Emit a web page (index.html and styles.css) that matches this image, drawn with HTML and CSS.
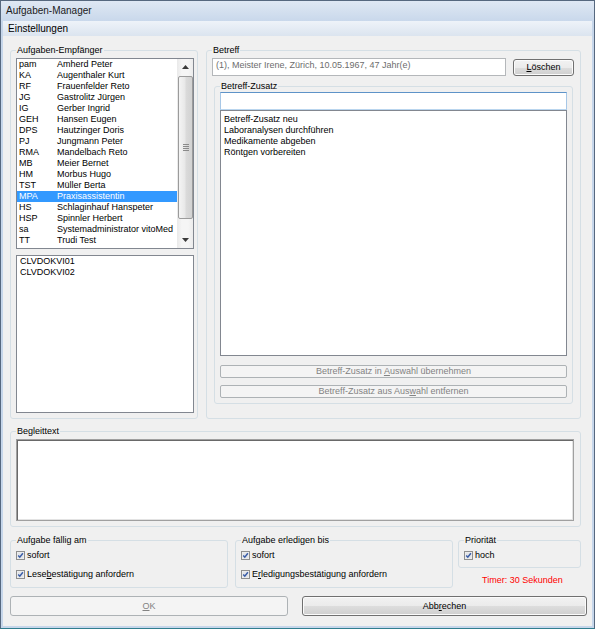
FILE: index.html
```html
<!DOCTYPE html>
<html lang="de">
<head>
<meta charset="utf-8">
<title>Aufgaben-Manager</title>
<link rel="stylesheet" href="styles.css">
</head>
<body>
<div class="window">
  <div class="titlebar">Aufgaben-Manager</div>
  <div class="frame-body">
    <div class="menubar"><span class="menu-item">Einstellungen</span></div>
    <div class="client">
      <div class="top-row">
        <fieldset class="group group-recipients">
          <legend>Aufgaben-Empfänger</legend>
          <div class="listbox listbox-users">
            <div class="list-rows">
              <div class="row"><span class="code">pam</span><span class="name">Amherd Peter</span></div>
              <div class="row"><span class="code">KA</span><span class="name">Augenthaler Kurt</span></div>
              <div class="row"><span class="code">RF</span><span class="name">Frauenfelder Reto</span></div>
              <div class="row"><span class="code">JG</span><span class="name">Gastrolitz Jürgen</span></div>
              <div class="row"><span class="code">IG</span><span class="name">Gerber Ingrid</span></div>
              <div class="row"><span class="code">GEH</span><span class="name">Hansen Eugen</span></div>
              <div class="row"><span class="code">DPS</span><span class="name">Hautzinger Doris</span></div>
              <div class="row"><span class="code">PJ</span><span class="name">Jungmann Peter</span></div>
              <div class="row"><span class="code">RMA</span><span class="name">Mandelbach Reto</span></div>
              <div class="row"><span class="code">MB</span><span class="name">Meier Bernet</span></div>
              <div class="row"><span class="code">HM</span><span class="name">Morbus Hugo</span></div>
              <div class="row"><span class="code">TST</span><span class="name">Müller Berta</span></div>
              <div class="row row-selected"><span class="code">MPA</span><span class="name">Praxisassistentin</span></div>
              <div class="row"><span class="code">HS</span><span class="name">Schlaginhauf Hanspeter</span></div>
              <div class="row"><span class="code">HSP</span><span class="name">Spinnler Herbert</span></div>
              <div class="row"><span class="code">sa</span><span class="name">Systemadministrator vitoMed</span></div>
              <div class="row"><span class="code">TT</span><span class="name">Trudi Test</span></div>
            </div>
            <div class="scrollbar">
              <div class="sb-btn">
                <svg width="7" height="4" viewBox="0 0 7 4"><path d="M0 4 L3.5 0 L7 4 Z" fill="#3a3a3a"/></svg>
              </div>
              <div class="sb-track">
                <div class="sb-thumb">
                  <svg width="6" height="7" viewBox="0 0 6 7">
                    <path d="M0 0.5 H6 M0 2.5 H6 M0 4.5 H6 M0 6.5 H6" stroke="#8a8a8a" stroke-width="1"/>
                  </svg>
                </div>
              </div>
              <div class="sb-btn">
                <svg width="7" height="4" viewBox="0 0 7 4"><path d="M0 0 L3.5 4 L7 0 Z" fill="#3a3a3a"/></svg>
              </div>
            </div>
          </div>
          <div class="listbox listbox-computers">
            <div class="list-rows">
              <div class="row row-plain">CLVDOKVI01</div>
              <div class="row row-plain">CLVDOKVI02</div>
            </div>
          </div>
        </fieldset>

        <fieldset class="group group-subject">
          <legend>Betreff</legend>
          <div class="subject-row">
            <div class="textbox textbox-disabled">(1), Meister Irene, Zürich, 10.05.1967, 47 Jahr(e)</div>
            <button class="btn btn-delete" type="button"><u>L</u>öschen</button>
          </div>
          <fieldset class="group group-addon">
            <legend>Betreff-Zusatz</legend>
            <div class="textbox textbox-focus"></div>
            <div class="listbox listbox-addons">
              <div class="list-rows list-rows-addons">
                <div class="row row-plain">Betreff-Zusatz neu</div>
                <div class="row row-plain">Laboranalysen durchführen</div>
                <div class="row row-plain">Medikamente abgeben</div>
                <div class="row row-plain">Röntgen vorbereiten</div>
              </div>
            </div>
            <button class="btn btn-disabled btn-wide btn-first" type="button">Betreff-Zusatz in <u>A</u>uswahl übernehmen</button>
            <button class="btn btn-disabled btn-wide btn-second" type="button">Betreff-Zusatz aus Aus<u>w</u>ahl entfernen</button>
          </fieldset>
        </fieldset>
      </div>

      <fieldset class="group group-text">
        <legend>Begleittext</legend>
        <div class="memo"></div>
      </fieldset>

      <div class="bottom-row">
        <fieldset class="group group-due">
          <legend>Aufgabe fällig am</legend>
          <div class="check-row">
            <svg class="checkbox" width="9" height="9" viewBox="0 0 9 9"><rect x="0.5" y="0.5" width="8" height="8" fill="#f3f3f3" stroke="#8e8f8f"/><rect x="1.5" y="1.5" width="6" height="6" fill="#e3e5e8"/><path d="M2.2 4.4 L3.8 6.2 L6.9 2.2" fill="none" stroke="#3b5ea8" stroke-width="1.5"/></svg>
            <span>sofort</span>
          </div>
          <div class="check-row">
            <svg class="checkbox" width="9" height="9" viewBox="0 0 9 9"><rect x="0.5" y="0.5" width="8" height="8" fill="#f3f3f3" stroke="#8e8f8f"/><rect x="1.5" y="1.5" width="6" height="6" fill="#e3e5e8"/><path d="M2.2 4.4 L3.8 6.2 L6.9 2.2" fill="none" stroke="#3b5ea8" stroke-width="1.5"/></svg>
            <span>Lese<u>b</u>estätigung anfordern</span>
          </div>
        </fieldset>
        <fieldset class="group group-done">
          <legend>Aufgabe erledigen bis</legend>
          <div class="check-row">
            <svg class="checkbox" width="9" height="9" viewBox="0 0 9 9"><rect x="0.5" y="0.5" width="8" height="8" fill="#f3f3f3" stroke="#8e8f8f"/><rect x="1.5" y="1.5" width="6" height="6" fill="#e3e5e8"/><path d="M2.2 4.4 L3.8 6.2 L6.9 2.2" fill="none" stroke="#3b5ea8" stroke-width="1.5"/></svg>
            <span>sofort</span>
          </div>
          <div class="check-row">
            <svg class="checkbox" width="9" height="9" viewBox="0 0 9 9"><rect x="0.5" y="0.5" width="8" height="8" fill="#f3f3f3" stroke="#8e8f8f"/><rect x="1.5" y="1.5" width="6" height="6" fill="#e3e5e8"/><path d="M2.2 4.4 L3.8 6.2 L6.9 2.2" fill="none" stroke="#3b5ea8" stroke-width="1.5"/></svg>
            <span>E<u>r</u>ledigungsbestätigung anfordern</span>
          </div>
        </fieldset>
        <div class="priority-col">
          <fieldset class="group group-priority">
            <legend>Priorität</legend>
            <div class="check-row">
              <svg class="checkbox" width="9" height="9" viewBox="0 0 9 9"><rect x="0.5" y="0.5" width="8" height="8" fill="#f3f3f3" stroke="#8e8f8f"/><rect x="1.5" y="1.5" width="6" height="6" fill="#e3e5e8"/><path d="M2.2 4.4 L3.8 6.2 L6.9 2.2" fill="none" stroke="#3b5ea8" stroke-width="1.5"/></svg>
              <span>hoch</span>
            </div>
          </fieldset>
          <div class="timer">Timer: 30 Sekunden</div>
        </div>
      </div>

      <div class="button-row">
        <button class="btn btn-disabled btn-ok" type="button"><u>O</u>K</button>
        <button class="btn btn-cancel" type="button">Abb<u>r</u>echen</button>
      </div>
    </div>
  </div>
</div>
</body>
</html>
```

FILE: styles.css
```css
html, body {
  margin: 0;
  padding: 0;
  background: #ffffff;
}

body {
  font-family: "Liberation Sans", Arial, sans-serif;
  font-size: 9px;
  line-height: 11px;
  color: #000000;
}

.window {
  width: 595px;
  height: 629px;
  box-sizing: border-box;
  border: 1px solid #56687f;
  border-bottom-color: #2f7d8e;
  background: #c4d4e8;
  display: flex;
  flex-direction: column;
}

.titlebar {
  height: 20px;
  flex: none;
  padding-left: 5px;
  font-size: 10px;
  line-height: 20px;
  color: #1a1a1a;
  background: linear-gradient(#dfe8f4, #c9d8eb);
}

.frame-body {
  flex: 1;
  display: flex;
  flex-direction: column;
  padding: 0 2px 2px 2px;
  background: #c6d6ea;
}

.menubar {
  height: 15px;
  flex: none;
  padding-left: 5px;
  font-size: 10px;
  line-height: 15px;
  background: linear-gradient(#eef3f9, #dbe4ef);
}

.client {
  flex: 1;
  background: #f0f0f0;
  padding: 9px 5px 0 7px;
  display: flex;
  flex-direction: column;
}

/* group boxes */
.group {
  margin: 0;
  min-width: 0;
  border: 1px solid #d5dfe5;
  border-radius: 3px;
  box-sizing: border-box;
}

.group > legend {
  padding: 0 1px;
  margin: 0;
  height: 11px;
  line-height: 11px;
  font-size: 9px;
}

.top-row {
  width: 571px;
  display: grid;
  grid-template-columns: 188px 375px;
  column-gap: 8px;
}

.group-recipients {
  padding: 2px 3px 5px 5px;
}

.group-subject {
  padding: 2px 6px 14px 5px;
}

/* list boxes */
.listbox {
  border: 1px solid #828790;
  background: #ffffff;
  box-sizing: border-box;
  display: flex;
}

.listbox-users {
  height: 191px;
}

.listbox-computers {
  height: 158px;
  margin-top: 6px;
}

.list-rows {
  flex: 1;
  min-width: 0;
}

.row {
  height: 11px;
  line-height: 11px;
  display: flex;
  white-space: nowrap;
  padding-left: 2px;
}

.row-plain {
  padding-left: 3px;
}

.code {
  width: 38px;
  flex: none;
}

.row-selected {
  background: #3399ff;
  color: #ffffff;
}

.list-rows-addons {
  padding-top: 3px;
}

/* scrollbar */
.scrollbar {
  width: 16px;
  flex: none;
  display: flex;
  flex-direction: column;
  background: linear-gradient(90deg, #e9e9e9, #f5f5f5 30%, #f5f5f5 70%, #ececec);
}

.sb-btn {
  height: 16px;
  flex: none;
  display: flex;
  align-items: center;
  justify-content: center;
}

.sb-track {
  flex: 1;
  display: flex;
  flex-direction: column;
}

.sb-thumb {
  margin: 1px 0 0 1px;
  height: 143px;
  box-sizing: border-box;
  border: 1px solid #9b9b9b;
  border-radius: 2px;
  background: linear-gradient(90deg, #f4f4f4, #e8e8e8 45%, #dadada 55%, #d2d2d2);
  display: flex;
  align-items: center;
  justify-content: center;
}

/* subject */
.subject-row {
  display: flex;
  gap: 7px;
  height: 18px;
}

.textbox {
  box-sizing: border-box;
  background: #ffffff;
  white-space: nowrap;
  overflow: hidden;
}

.textbox-disabled {
  flex: 1;
  height: 18px;
  border: 1px solid #b4b7ba;
  color: #6d6d6d;
  padding: 1px 0 0 3px;
}

.group-addon {
  margin: 5px 1px 0 2px;
  padding: 0 5px 5px 5px;
}

.textbox-focus {
  height: 18px;
  border: 1px solid;
  border-color: #5e93c8 #a7c7e6 #b9d5ee #a7c7e6;
}

.listbox-addons {
  height: 246px;
}

/* buttons */
.btn {
  font-family: inherit;
  font-size: 9px;
  line-height: 11px;
  margin: 0;
  padding: 0;
  box-sizing: border-box;
  border-radius: 3px;
  text-align: center;
  color: #000000;
  border: 1px solid #707070;
  background: linear-gradient(#f2f2f2 0%, #ebebeb 50%, #dddddd 51%, #cfcfcf 100%);
  box-shadow: inset 0 0 0 1px #fbfbfb;
}

.btn u {
  text-decoration: underline;
  text-underline-offset: 1px;
}

.btn-delete {
  width: 61px;
  height: 17px;
  flex: none;
  margin-top: 1px;
}

.btn-disabled {
  border-color: #adb2b5;
  background: #f4f4f4;
  box-shadow: none;
  color: #838383;
}

.btn-wide {
  display: block;
  width: 100%;
  height: 13px;
  border-radius: 2px;
}

.btn-first {
  margin-top: 9px;
}

.btn-second {
  margin-top: 7px;
}

/* memo */
.group-text {
  width: 571px;
  margin-top: 7px;
  padding: 2px 6px 5px 5px;
}

.memo {
  height: 82px;
  box-sizing: border-box;
  background: #ffffff;
  border: 1px solid #a0a0a0;
  box-shadow: inset 1px 1px 0 #696969, inset -1px -1px 0 #e3e3e3;
}

/* bottom */
.bottom-row {
  width: 571px;
  margin-top: 8px;
  display: flex;
  align-items: flex-start;
}

.group-due,
.group-done {
  width: 218px;
  flex: none;
  padding: 3px 5px 6px 5px;
}

.group-done {
  margin-left: 7px;
}

.priority-col {
  width: 123px;
  margin-left: 5px;
  flex: none;
}

.group-priority {
  padding: 3px 5px 5px 5px;
}

.check-row {
  height: 13px;
  display: flex;
  align-items: center;
  gap: 1px;
  white-space: nowrap;
}

.check-row + .check-row {
  margin-top: 6px;
}

.checkbox {
  flex: none;
  margin-right: 1px;
}

.timer {
  margin-top: 7px;
  padding-left: 24px;
  color: #ff0000;
  white-space: nowrap;
}

.button-row {
  margin-top: 8px;
  display: flex;
  gap: 14px;
}

.btn-ok {
  width: 278px;
  height: 20px;
}

.btn-cancel {
  width: 285px;
  height: 20px;
}
```
